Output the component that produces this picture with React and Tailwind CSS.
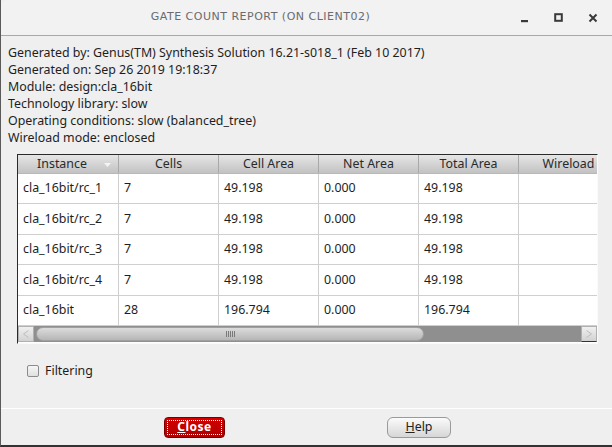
import React from "react";

const rows = [
  ["cla_16bit/rc_1", "7", "49.198", "0.000", "49.198", ""],
  ["cla_16bit/rc_2", "7", "49.198", "0.000", "49.198", ""],
  ["cla_16bit/rc_3", "7", "49.198", "0.000", "49.198", ""],
  ["cla_16bit/rc_4", "7", "49.198", "0.000", "49.198", ""],
  ["cla_16bit", "28", "196.794", "0.000", "196.794", ""],
];

const headers = ["Instance", "Cells", "Cell Area", "Net Area", "Total Area", "Wireload"];

export default function App() {
  return (
    <div className="w-[612px] h-[447px] bg-[#efefef] flex flex-col overflow-hidden border-l border-[#5a5a5a] border-b-2 border-b-[#333] font-['Noto_Sans',sans-serif] text-[#1e1e1e]">
      {/* title bar */}
      <div className="h-[36px] shrink-0 flex items-center bg-[#f2f2f2] border-b border-[#a8a8a8] rounded-tl-[6px] relative">
        <div className="flex-1 text-center text-[11px] tracking-[0.5px] text-[#6a6a70] font-['DejaVu_Sans',sans-serif]">
          GATE COUNT REPORT (ON CLIENT02)
        </div>
        <div className="flex items-center gap-[24px] pr-[14px]">
          <svg width="10" height="10" viewBox="0 0 10 10"><rect x="1" y="7" width="7" height="2.2" fill="#3a3a3a" /></svg>
          <svg width="10" height="10" viewBox="0 0 10 10"><rect x="1.2" y="1.2" width="6.6" height="6.6" fill="none" stroke="#3a3a3a" strokeWidth="2" /></svg>
          <svg width="10" height="10" viewBox="0 0 10 10"><path d="M1.5 1.5 L8.5 8.5 M8.5 1.5 L1.5 8.5" stroke="#3a3a3a" strokeWidth="2" /></svg>
        </div>
      </div>

      {/* info */}
      <div className="pl-[7px] pt-[8px] text-[12.4px] leading-[17px] text-[#1e1e1e]">
        <div>Generated by: Genus(TM) Synthesis Solution 16.21-s018_1 (Feb 10 2017)</div>
        <div>Generated on: Sep 26 2019 19:18:37</div>
        <div>Module: design:cla_16bit</div>
        <div>Technology library: slow</div>
        <div>Operating conditions: slow (balanced_tree)</div>
        <div>Wireload mode: enclosed</div>
      </div>

      {/* table */}
      <div className="ml-[16px] mt-[8px] w-[581px] h-[190px] border-t border-l border-[#2a2a2a] border-r border-b border-r-[#fafafa] border-b-[#fafafa] bg-white flex flex-col overflow-hidden">
        <div className="flex-1 overflow-hidden">
          <div className="w-[620px]">
            <div className="flex h-[19px] bg-gradient-to-b from-[#e6e6e6] to-[#c2c2c2] text-[12.4px] text-[#2a2a2a] border-b border-[#b8b8b8]">
              {headers.map((h, i) => (
                <div
                  key={h}
                  className={`w-[100px] shrink-0 flex items-center justify-center leading-[18px] ${i > 0 ? "border-l border-[#a9a9a9]" : ""} relative`}
                >
                  {i === 0 ? (
                    <>
                      <span className="pr-[12px]">{h}</span>
                      <svg className="absolute right-[7px] top-[8px]" width="7" height="4" viewBox="0 0 7 4"><path d="M0 0 L7 0 L3.5 4 Z" fill="#f4f4f4" /></svg>
                    </>
                  ) : (
                    <span>{h}</span>
                  )}
                </div>
              ))}
            </div>
            {rows.map((r, ri) => (
              <div key={ri} className={`flex ${ri % 2 === 1 ? "h-[31px]" : "h-[30px]"} border-b border-[#cfcfcf] text-[12.4px] text-[#1e1e1e]`}>
                {r.map((c, ci) => (
                  <div
                    key={ci}
                    className={`w-[100px] shrink-0 flex items-center pl-[5px] ${ci > 0 ? "border-l border-[#cfcfcf]" : ""}`}
                  >
                    {c}
                  </div>
                ))}
              </div>
            ))}
          </div>
        </div>
        {/* scrollbar */}
        <div className="h-[16px] shrink-0 flex bg-[#8f8f8f] mb-[1px]">
          <div className="w-[16px] h-full bg-gradient-to-b from-[#f0f0f0] to-[#d2d2d2] border border-[#b0b0b0] flex items-center justify-center">
            <svg width="6" height="8" viewBox="0 0 6 8"><path d="M5.5 0.5 L0.5 4 L5.5 7.5" fill="none" stroke="#bdbdbd" strokeWidth="1" /></svg>
          </div>
          <div className="flex-1 relative">
            <div className="absolute left-[2px] top-[1px] h-[14px] w-[388px] rounded-[7px] bg-gradient-to-b from-[#dcdcdc] to-[#b6b6b6] border border-[#a0a0a0] flex items-center justify-center">
              <div className="flex gap-[1px]">
                <div className="w-[1px] h-[6px] bg-[#7a7a7a]" />
                <div className="w-[1px] h-[6px] bg-[#7a7a7a]" />
                <div className="w-[1px] h-[6px] bg-[#7a7a7a]" />
                <div className="w-[1px] h-[6px] bg-[#7a7a7a]" />
                <div className="w-[1px] h-[6px] bg-[#7a7a7a]" />
              </div>
            </div>
          </div>
          <div className="w-[16px] h-full bg-gradient-to-b from-[#f0f0f0] to-[#d2d2d2] border border-[#b0b0b0] border-b-[#333] flex items-center justify-center">
            <svg width="6" height="8" viewBox="0 0 6 8"><path d="M0.5 0.5 L5.5 4 L0.5 7.5" fill="none" stroke="#bdbdbd" strokeWidth="1" /></svg>
          </div>
        </div>
      </div>

      {/* filtering */}
      <div className="flex items-center ml-[26px] mt-[18px] gap-[6px] text-[12.4px]">
        <div className="w-[12px] h-[12px] bg-gradient-to-b from-[#f6f6f6] to-[#e0e0e0] border border-[#8c8c8c] rounded-[2px]" />
        <span>Filtering</span>
      </div>

      {/* separator */}
      <div className="mt-[27px] h-[1px] bg-white" />

      {/* buttons */}
      <div className="flex mt-[8px] h-[21px]">
        <div className="ml-[163px] w-[61px] h-[21px] rounded-[4px] bg-gradient-to-b from-[#d40000] to-[#b00000] border border-[#7a0000] p-[2px]">
          <div className="w-full h-full border border-dotted border-white flex items-center justify-center text-[12px] font-bold text-white tracking-[0.5px] leading-none">
            <span><span className="underline">C</span>lose</span>
          </div>
        </div>
        <div className="ml-[162px] w-[64px] h-[21px] rounded-[6px] bg-gradient-to-b from-[#fbfbfb] to-[#d6d6d6] border border-[#9a9a9a] flex items-center justify-center text-[12.4px] text-[#222]">
          <span><span className="underline">H</span>elp</span>
        </div>
      </div>
    </div>
  );
}
